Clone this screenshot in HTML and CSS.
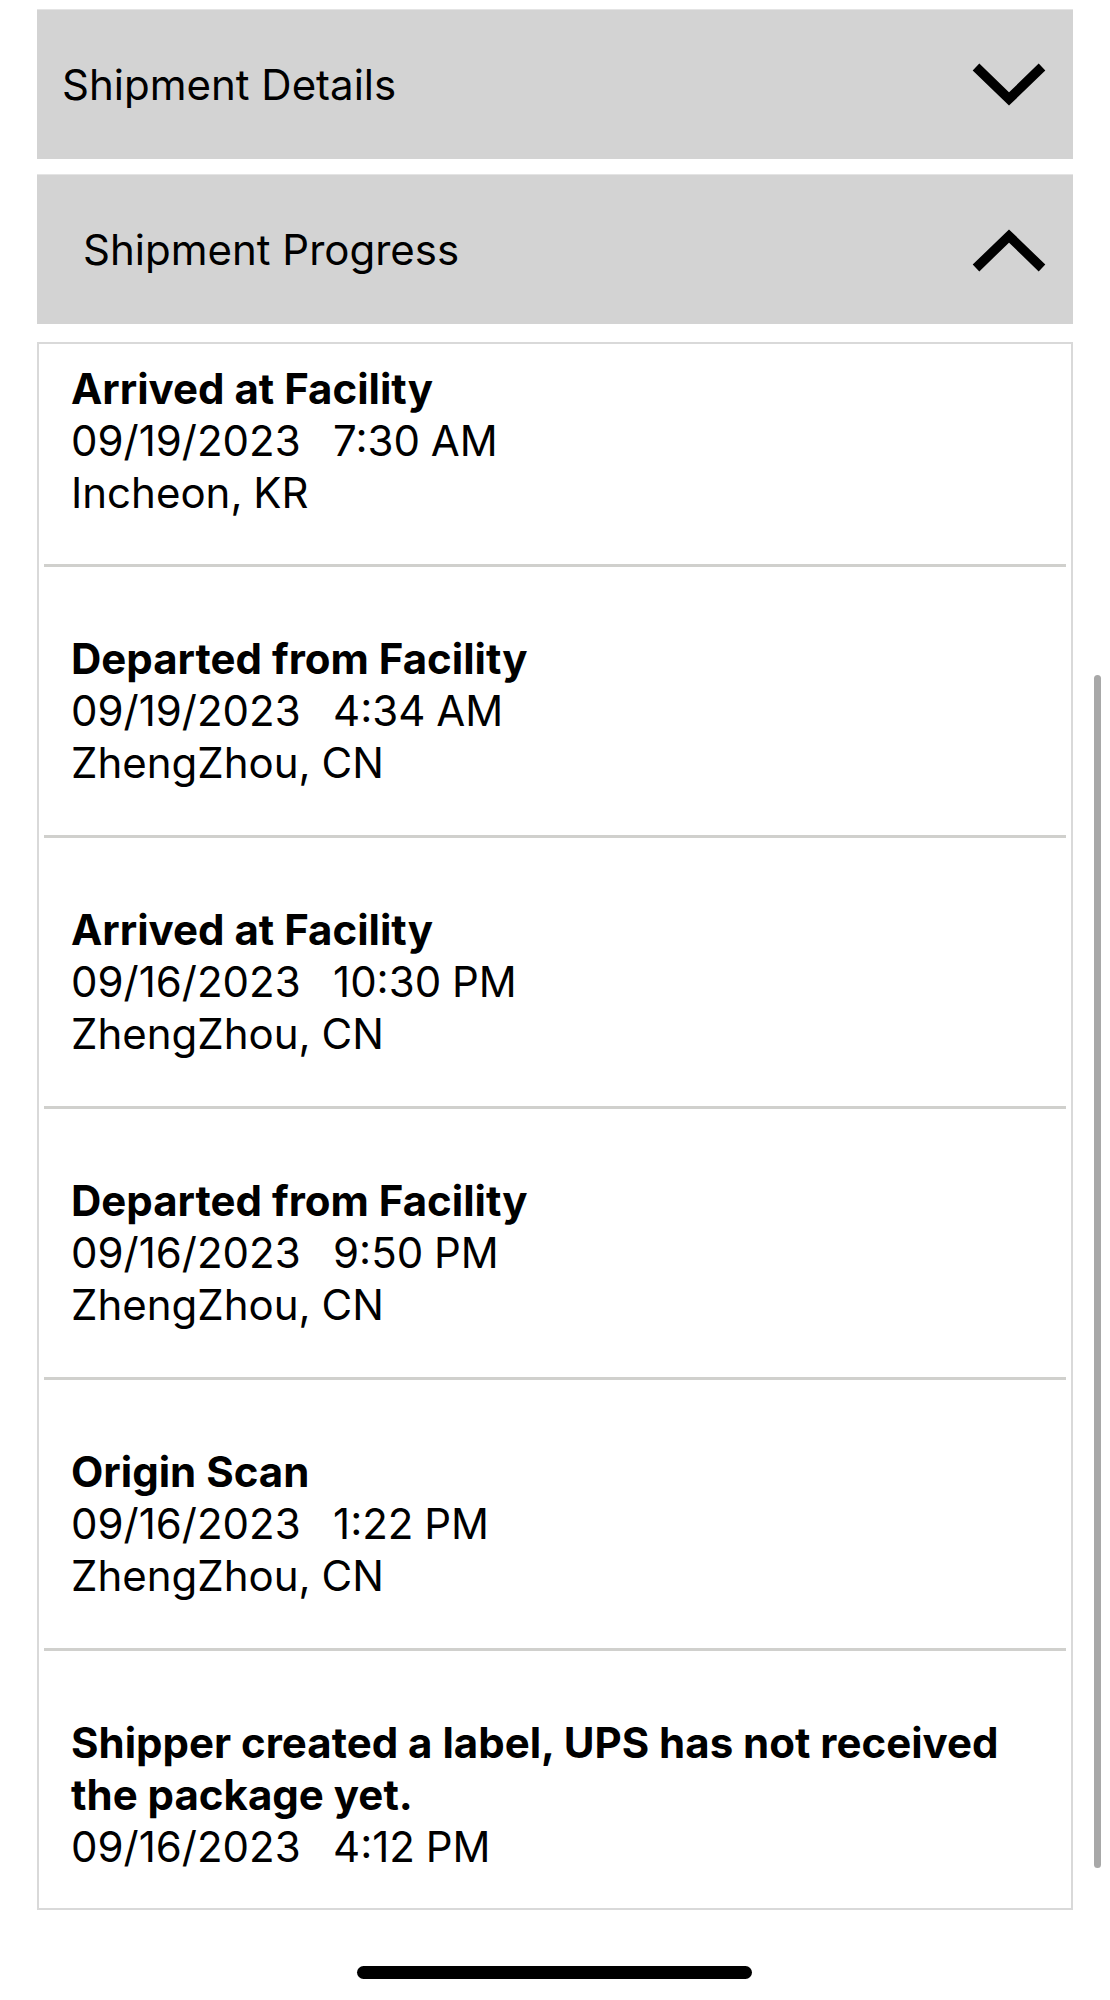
FILE: index.html
```html
<!DOCTYPE html>
<html lang="en">
<head>
<meta charset="utf-8">
<title>Shipment Progress</title>
<link rel="stylesheet" href="styles.css">
</head>
<body>
<div class="page">
  <div class="panel-header">
    <span class="panel-title">Shipment Details</span>
    <svg class="chevron" viewBox="0 0 74 46" width="74" height="46" aria-hidden="true">
      <polyline points="4,5 37,37 70,5" fill="none" stroke="#000" stroke-width="9.5" stroke-linejoin="miter"/>
    </svg>
  </div>
  <div class="panel-header panel-header--open">
    <span class="panel-title">Shipment Progress</span>
    <svg class="chevron" viewBox="0 0 74 46" width="74" height="46" aria-hidden="true">
      <polyline points="4,41 37,9 70,41" fill="none" stroke="#000" stroke-width="9.5" stroke-linejoin="miter"/>
    </svg>
  </div>

  <div class="progress-card">
    <ul class="events">
      <li class="event event--first">
        <div class="event-title">Arrived at Facility</div>
        <div class="event-line">09/19/2023   7:30 AM</div>
        <div class="event-line">Incheon, KR</div>
      </li>
      <li class="event">
        <div class="event-title">Departed from Facility</div>
        <div class="event-line">09/19/2023   4:34 AM</div>
        <div class="event-line">ZhengZhou, CN</div>
      </li>
      <li class="event">
        <div class="event-title">Arrived at Facility</div>
        <div class="event-line">09/16/2023   10:30 PM</div>
        <div class="event-line">ZhengZhou, CN</div>
      </li>
      <li class="event">
        <div class="event-title">Departed from Facility</div>
        <div class="event-line">09/16/2023   9:50 PM</div>
        <div class="event-line">ZhengZhou, CN</div>
      </li>
      <li class="event">
        <div class="event-title">Origin Scan</div>
        <div class="event-line">09/16/2023   1:22 PM</div>
        <div class="event-line">ZhengZhou, CN</div>
      </li>
      <li class="event event--last">
        <div class="event-title">Shipper created a label, UPS has not received the package yet.</div>
        <div class="event-line">09/16/2023   4:12 PM</div>
      </li>
    </ul>
  </div>
  <div class="scrollbar"></div>
  <div class="home-indicator"></div>
</div>
</body>
</html>
```

FILE: styles.css
```css
* { box-sizing: border-box; }

html, body {
  margin: 0;
  padding: 0;
  background: #ffffff;
}

body {
  font-family: Inter, "Noto Sans", "Liberation Sans", sans-serif;
  color: #000;
  width: 1110px;
  height: 2000px;
  overflow: hidden;
}

.page {
  position: relative;
  padding: 9px 0 0 37px;
  width: 1110px;
  height: 2000px;
}

.panel-header {
  width: 1036px;
  height: 150px;
  background: #d3d3d3;
  border-top: 1px solid #e4e4e4;
  display: flex;
  align-items: center;
  justify-content: space-between;
  padding: 0 27px 0 25px;
}

.panel-header + .panel-header {
  margin-top: 15px;
}

.panel-header--open {
  padding-left: 46px;
}

.panel-title {
  font-size: 42px;
  font-weight: 400;
}

.chevron {
  display: block;
  flex: none;
}

.progress-card {
  margin-top: 18px;
  width: 1036px;
  border: 2px solid #d9d9d9;
  background: #fff;
}

.events {
  list-style: none;
  margin: 0;
  padding: 0;
}

.event {
  padding: 66px 33px 46px 32px;
  font-size: 42px;
  line-height: 52px;
}

.event + .event {
  border-top: 3px solid #d0d0cd;
  margin: 0 5px;
  padding-left: 27px;
  padding-right: 28px;
}

.event--first {
  padding-top: 19px;
  padding-bottom: 45px;
}

.event--last {
  padding-bottom: 35px;
}

.event-title {
  font-weight: 700;
  max-width: 960px;
}

.event-line {
  white-space: pre;
  word-spacing: -1px;
}

.scrollbar {
  position: absolute;
  left: 1094px;
  top: 675px;
  width: 7px;
  height: 1193px;
  border-radius: 4px;
  background: #a8a8a8;
}

.home-indicator {
  width: 395px;
  height: 13px;
  border-radius: 7px;
  background: #000;
  margin: 56px auto 0 320px;
}
```
